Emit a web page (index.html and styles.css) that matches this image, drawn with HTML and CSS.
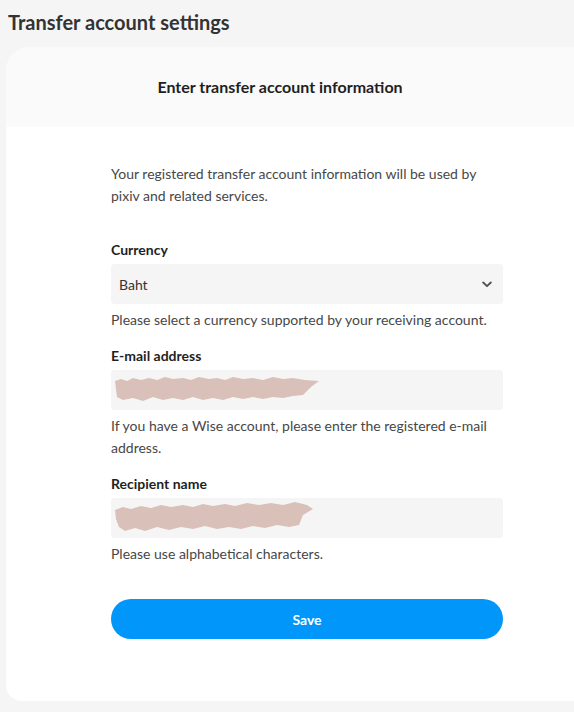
FILE: index.html
```html
<!DOCTYPE html>
<html lang="en">
<head>
<meta charset="utf-8">
<title>Transfer account settings</title>
<link rel="stylesheet" href="styles.css">
</head>
<body>
<h1 class="page-title">Transfer account settings</h1>
<section class="card">
  <header class="card-header">
    <h2 class="card-title">Enter transfer account information</h2>
  </header>
  <div class="card-body">
    <form class="form">
      <p class="intro">Your registered transfer account information will be used by pixiv and related services.</p>

      <div class="field">
        <label class="label">Currency</label>
        <div class="select">
          <span class="select-value">Baht</span>
          <svg class="chevron" width="10" height="7" viewBox="0 0 10 7"><path d="M1.2 1.5 L5 5.2 L8.8 1.5" fill="none" stroke="#505050" stroke-width="1.8" stroke-linecap="round" stroke-linejoin="round"/></svg>
        </div>
        <p class="help">Please select a currency supported by your receiving account.</p>
      </div>

      <div class="field">
        <label class="label">E-mail address</label>
        <div class="input">
          <svg class="redact" width="210" height="30" viewBox="0 0 210 30"><path d="M2 6 L8 4 L14 6 L20 3 L28 5 L36 3 L44 5 L52 2 L60 4 L70 3 L78 5 L86 2 L96 4 L104 3 L112 5 L120 2 L130 4 L140 3 L150 5 L160 2 L170 4 L180 3 L192 5 L206 6 L198 12 L190 20 L180 21 L170 23 L160 22 L150 24 L140 22 L130 24 L120 22 L110 25 L100 23 L90 25 L80 22 L70 25 L60 23 L50 25 L40 22 L30 26 L20 23 L10 25 L4 22 L3 14 Z" fill="#d9c1b9"/></svg>
        </div>
        <p class="help">If you have a Wise account, please enter the registered e-mail address.</p>
      </div>

      <div class="field">
        <label class="label">Recipient name</label>
        <div class="input">
          <svg class="redact" width="205" height="34" viewBox="0 0 205 34"><path d="M2 9 L10 6 L18 8 L28 5 L38 7 L48 4 L58 6 L70 4 L80 6 L90 3 L100 5 L112 3 L122 5 L134 2 L146 4 L158 2 L170 4 L182 1 L194 4 L200 8 L190 14 L186 24 L176 26 L164 24 L152 27 L140 25 L128 28 L116 26 L104 28 L92 25 L80 28 L68 26 L56 29 L44 26 L32 30 L22 27 L12 30 L6 26 L3 18 Z" fill="#d9c1b9"/></svg>
        </div>
        <p class="help">Please use alphabetical characters.</p>
      </div>

      <button type="button" class="save">Save</button>
    </form>
  </div>
</section>
</body>
</html>
```

FILE: styles.css
```css
html, body {
  margin: 0;
  padding: 0;
  background: #f5f5f5;
  font-family: Lato, "Noto Sans", sans-serif;
}

.page-title {
  margin: 0;
  padding: 8px 0 0 8px;
  font-size: 20px;
  line-height: 28px;
  font-weight: 700;
  color: #333333;
}

.card {
  margin: 11px 0 0 6px;
  background: #ffffff;
  border-radius: 24px 0 0 16px;
  overflow: hidden;
}

.card-header {
  height: 80px;
  background: #fafafa;
  display: flex;
  align-items: center;
  justify-content: center;
  padding-right: 20px;
}

.card-title {
  margin: 0;
  font-size: 16px;
  line-height: 24px;
  font-weight: 700;
  color: #1f1f1f;
}

.card-body {
  padding: 36px 0 62px 105px;
}

.form {
  width: 392px;
  display: flex;
  flex-direction: column;
}

.intro {
  margin: 0 0 32px;
  font-size: 14px;
  line-height: 22px;
  color: #474747;
}

.field {
  display: flex;
  flex-direction: column;
  margin-bottom: 14px;
}

.label {
  font-size: 14px;
  line-height: 22px;
  font-weight: 700;
  color: #1f1f1f;
  margin-bottom: 3px;
}

.select, .input {
  height: 40px;
  background: #f5f5f5;
  border-radius: 4px;
  display: flex;
  align-items: center;
  box-sizing: border-box;
}

.select {
  padding: 0 11px 0 8px;
  justify-content: space-between;
}

.select-value {
  font-size: 14px;
  color: #333333;
}

.input {
  padding-left: 2px;
}

.redact {
  display: block;
}

.help {
  margin: 5px 0 0;
  font-size: 14px;
  line-height: 22px;
  color: #474747;
}

.save {
  margin-top: 20px;
  height: 40px;
  border: none;
  border-radius: 20px;
  background: #0096fa;
  color: #ffffff;
  font-family: inherit;
  font-size: 14px;
  font-weight: 700;
  cursor: pointer;
}
```
